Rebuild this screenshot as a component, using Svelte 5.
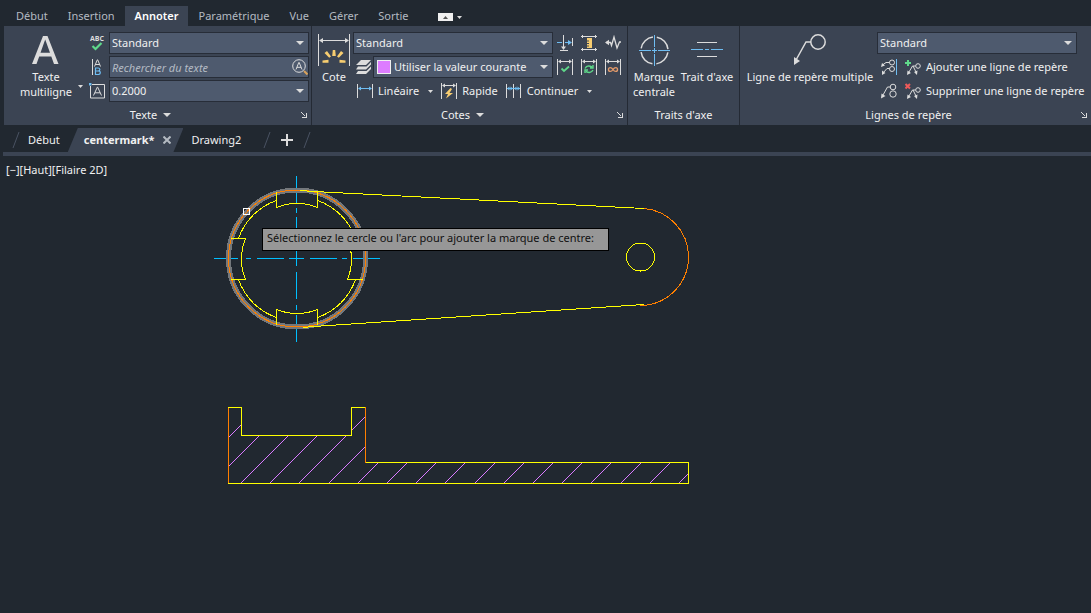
<script>
    let tabs = ['Début', 'Insertion', 'Annoter', 'Paramétrique', 'Vue', 'Gérer', 'Sortie'];
    let activeTab = 'Annoter';

    let textStyle = 'Standard';
    let search = '';
    let textHeight = '0.2000';
    let dimStyle = 'Standard';
    let dimLayer = 'Utiliser la valeur courante';
    let leaderStyle = 'Standard';

    // hatch lines run at 45deg, each one is x + y = sum
    let hatch = [];
    for (let k = 0; k < 18; k++) {
        hatch.push(Math.round(665.5 + 29.2 * k));
    }
</script>

{#snippet arrow()}
    <svg class="arrow" viewBox="0 0 8 4" aria-hidden="true"><path d="M0 0h8l-4 4z" /></svg>
{/snippet}

{#snippet smallArrow()}
    <svg class="arrow small" viewBox="0 0 5 3" aria-hidden="true"><path d="M0 0h5l-2.5 3z" /></svg>
{/snippet}

{#snippet launcher()}
    <button class="launcher" aria-label="Options">
        <svg viewBox="0 0 6 6" class="crisp"><path d="M0.5 0.5l4 4M5.5 1v4.5H1" /></svg>
    </button>
{/snippet}

<div class="app">
    <nav class="tabs">
        {#each tabs as tab}
            <button class="tab" class:active={tab === activeTab} on:click={() => (activeTab = tab)}>{tab}</button>
        {/each}
        <button class="minimize" aria-label="Réduire le ruban">
            <svg width="15" height="8" viewBox="0 0 15 8"><path fill="#f0f0f0" d="M0 0h15v8H0z" /><path fill="#555" d="M5 6l2.5-3L10 6z" /></svg>
            {@render smallArrow()}
        </button>
    </nav>

    <div class="ribbon">
        <section class="panel">
            <div class="body">
                <button class="big mtext">
                    <svg class="icon32" viewBox="0 0 32 32"><path fill="#dcdcdc" stroke="none" d="M2 30L13 2h4.500L28.500 30h-4.500l-2.700-7.500H9.200L6.500 30zM10.500 18.800h9.500L15.200 5.500z" /></svg>
                    <span>Texte<br />multiligne</span>
                    <span class="corner">{@render smallArrow()}</span>
                </button>
                <div class="rows">
                    <div class="row">
                        <button class="ico" aria-label="Orthographe">
                            <svg class="icon16" viewBox="0 0 16 16"><text x="8" y="6" class="abc">ABC</text><path d="M3.500 11l3 3 6-6" stroke="#5fd98a" stroke-width="2.200" /></svg>
                        </button>
                        <label class="field">
                            <select aria-label="Style de texte" bind:value={textStyle}><option>Standard</option></select>
                            {@render arrow()}
                        </label>
                    </div>
                    <div class="row">
                        <button class="ico" aria-label="Aligner le texte">
                            <svg class="icon16" viewBox="0 0 16 16"><path d="M3.500 0v16M5.500 7.500L8.300.8h.4l2.800 6.700M6.300 5.500h4.400" /><path d="M6.500 9v6.500h2.800q2-.1 2-1.800T9.300 12q1.600-.2 1.600-1.500T9.200 9zM6.500 12h3" stroke="#6fbdf2" stroke-width="1.200" /></svg>
                        </button>
                        <div class="field">
                            <input type="text" aria-label="Rechercher du texte" placeholder="Rechercher du texte" bind:value={search} />
                            <button class="find" aria-label="Rechercher">
                                <svg class="icon16" viewBox="0 0 16 16"><circle cx="7" cy="7" r="6.300" /><path d="M4 10.500L6.800 3.500h.4L10 10.500M5 8.300h4" /><path d="M12 12l3.500 3.500" stroke="#d9a25c" stroke-width="2" /></svg>
                            </button>
                        </div>
                    </div>
                    <div class="row">
                        <button class="ico" aria-label="Hauteur du texte">
                            <svg class="icon16" viewBox="0 0 16 16"><path d="M3 1.500h12.500v13.500H1.500V3" /><path d="M4.500 12.500L8.300 4.200h.4l3.800 8.300M6 9.800h5" /><path fill="#6fbdf2" stroke="none" d="M0 0h2.500v2.500H0z" /></svg>
                        </button>
                        <label class="field">
                            <select aria-label="Hauteur" bind:value={textHeight}><option>0.2000</option></select>
                            {@render arrow()}
                        </label>
                    </div>
                </div>
            </div>
            <footer><button class="title">Texte {@render arrow()}</button>{@render launcher()}</footer>
        </section>

        <section class="panel">
            <div class="body">
                <button class="big dim">
                    <svg class="icon32" viewBox="0 0 32 32">
                        <path d="M.5 0v32M31.500 0v32M2 6.500h28" class="crisp" />
                        <path fill="#dcdcdc" stroke="none" d="M1 6.500l4-2.500v5zM31 6.500l-4-2.500v5z" />
                        <path fill="#f7cd70" stroke="none" d="M14.800 16h2.400l.6 6h-3.600zM6.500 19l2.500-2 4 5.500-1.800 1.300zM25.500 19l-2.500-2-4 5.500 1.800 1.300zM4.500 26.500l6-.8v3h-6zM27.500 26.500l-6-.8v3h6z" />
                    </svg>
                    <span>Cote</span>
                </button>
                <div class="rows">
                    <div class="row">
                        <label class="field">
                            <select aria-label="Style de cote" bind:value={dimStyle}><option>Standard</option></select>
                            {@render arrow()}
                        </label>
                        <button class="ico" aria-label="Coupure"><svg class="icon16" viewBox="0 0 16 16"><path class="crisp" d="M6.500 0v13M3 15.500h8M15.500 3v8" /><path class="crisp" d="M0 7.500h5M8 7.500h5" stroke="#6fbdf2" /><path fill="#6fbdf2" stroke="none" d="M15 7.500L11 5v5z" /><path fill="#dcdcdc" stroke="none" d="M6.500 15L4 11.500h5z" /></svg></button>
                        <button class="ico" aria-label="Ajuster l'espace"><svg class="icon16" viewBox="0 0 16 16"><path class="crisp" d="M0 1.500h16M0 14.500h16M1.500 0v3M14.500 0v3M1.500 13v3M14.500 13v3" /><path fill="#f7cd70" stroke="none" d="M6 3h5v10H6v-1.500h2v-1H6V9h2V8H6V6.500h2v-1H6z" /></svg></button>
                        <button class="ico" aria-label="Ligne raccourcie"><svg class="icon16" viewBox="0 0 16 16"><path stroke-width="1.300" d="M1 7.500h4.500l1 3L9 2l3 11 2.500-6H16" /><path fill="#dcdcdc" stroke="none" d="M0 7.500l4-2.800v5.600z" /></svg></button>
                    </div>
                    <div class="row">
                        <svg class="layers" viewBox="0 0 16 16"><path fill="#dcdcdc" stroke="none" d="M6 1h10l-5 5H1zM3 7.500h8.500L16 3v2.500L11 10.500H1zM3 12h8.500L16 7.500V10L11 15H1z" /></svg>
                        <label class="field wide">
                            <select aria-label="Calque de cote" bind:value={dimLayer}><option>Utiliser la valeur courante</option></select>
                            <span class="swatch"></span>
                            {@render arrow()}
                        </label>
                        <button class="ico" aria-label="Inspecter"><svg class="icon16" viewBox="0 0 16 16"><path class="crisp" d="M.5 0v16M15.500 0v16M2 2.500h12" /><path fill="#dcdcdc" stroke="none" d="M1 2.500l3-2v4zM15 2.500l-3-2v4z" /><path d="M4.500 9.500L7 12l5-4.500" stroke="#5fd98a" stroke-width="1.800" /></svg></button>
                        <button class="ico" aria-label="Mettre à jour"><svg class="icon16" viewBox="0 0 16 16"><path class="crisp" d="M.5 0v16M15.500 0v16M2 2.500h12" /><path fill="#dcdcdc" stroke="none" d="M1 2.500l3-2v4zM15 2.500l-3-2v4z" /><path d="M4 9.500Q6 5.500 11 8M12 6v3H9M12 11q-2 4-7 1.500M4 14v-3h3" stroke="#5fd98a" stroke-width="1.400" /></svg></button>
                        <button class="ico" aria-label="Réassocier"><svg class="icon16" viewBox="0 0 16 16"><path class="crisp" d="M.5 0v16M15.500 0v16M2 2.500h12" /><path fill="#dcdcdc" stroke="none" d="M1 2.500l3-2v4zM15 2.500l-3-2v4z" /><path d="M8 10.500C6.500 8 3.500 8 3.500 10.500S6.500 13 8 10.500 12.500 8 12.500 10.500 9.500 13 8 10.500" stroke="#e39a6a" stroke-width="1.400" /></svg></button>
                    </div>
                    <div class="row commands">
                        <button class="cmd"><svg class="icon16" viewBox="0 0 16 16"><path class="crisp" d="M.5 1v14M15.500 1v14" /><path class="crisp" d="M2 5.500h12" stroke="#6fbdf2" /><path fill="#6fbdf2" stroke="none" d="M1 5.500l3-2v4zM15 5.500l-3-2v4z" /></svg>Linéaire</button>
                        <button class="drop" aria-label="Autres cotes">{@render smallArrow()}</button>
                        <button class="cmd"><svg class="icon16" viewBox="0 0 16 16"><path class="crisp" d="M.5 0v16M15.500 0v16M2 2.500h12" /><path fill="#dcdcdc" stroke="none" d="M1 2.500l3-2v4zM15 2.500l-3-2v4z" /><path fill="#f7cd70" stroke="none" d="M9.500 5L4 11h3l-2 4.500L12 10H8.500L11 6z" /></svg>Rapide</button>
                        <button class="cmd next"><svg class="icon16" viewBox="0 0 16 16"><path class="crisp" d="M.5 1v14M7.500 1v14M14.500 1v14" /><path class="crisp" d="M1 5.500h13" stroke="#6fbdf2" /><path fill="#6fbdf2" stroke="none" d="M1 5.500l2.500-2v4zM7 5.500l-2.500-2v4zM8 5.500l2.500-2v4zM14 5.500l-2.500-2v4z" /></svg>Continuer</button>
                        <button class="drop" aria-label="Continuer, options">{@render smallArrow()}</button>
                    </div>
                </div>
            </div>
            <footer><button class="title">Cotes {@render arrow()}</button>{@render launcher()}</footer>
        </section>

        <section class="panel">
            <div class="body">
                <button class="big mark">
                    <svg class="icon32" viewBox="0 0 32 32"><circle cx="16.500" cy="16.500" r="13.500" stroke-width="1.500" stroke-dasharray="17.200 4" stroke-dashoffset="-2" /><path class="crisp" stroke="#6fbdf2" d="M1 16.500h12M14 16.500h5M20 16.500h12M16.500 1v12M16.500 14v5M16.500 20v12" /></svg>
                    <span>Marque<br />centrale</span>
                </button>
                <button class="big axis">
                    <svg class="icon32" viewBox="0 0 32 32"><path class="crisp" d="M6 8.500h20M6 22.500h20" /><path class="crisp" stroke="#6fbdf2" d="M0 15.500h12M14 15.500h4M20 15.500h12" /></svg>
                    <span>Trait d'axe</span>
                </button>
            </div>
            <footer><span class="title">Traits d'axe</span></footer>
        </section>

        <section class="panel last">
            <div class="body">
                <button class="big leader">
                    <svg class="icon32" viewBox="0 0 32 32"><circle cx="24" cy="8" r="7.200" stroke-width="1.500" /><path stroke-width="1.500" d="M17 8h-5L2 26" /><path fill="#dcdcdc" stroke="none" d="M0 31V23l6 4z" /></svg>
                    <span>Ligne de repère multiple</span>
                </button>
                <div class="rows">
                    <div class="row">
                        <label class="field">
                            <select aria-label="Style de ligne de repère" bind:value={leaderStyle}><option>Standard</option></select>
                            {@render arrow()}
                        </label>
                    </div>
                    <div class="row edit">
                        <button class="ico" aria-label="Aligner"><svg class="icon16" viewBox="0 0 16 16"><circle cx="11" cy="3.500" r="2.500" /><circle cx="11" cy="10" r="2.500" /><path d="M8.500 3.500H5L1.500 6M8.500 9.500H6L2 14" /><path fill="#dcdcdc" stroke="none" d="M0 8l1-4 3 2.500zM1 16v-4.500l3.500 2.500z" /><path class="crisp" stroke="#6fbdf2" d="M15.500 0v16" /></svg></button>
                        <button class="cmd"><svg class="icon16" viewBox="0 0 16 16"><path class="crisp" stroke="#5fd98a" stroke-width="2" d="M0 4h6M3 1v6" /><circle cx="13" cy="7" r="2.300" /><path d="M10.700 7H7.500L4 13M8 7l3 6" /><path fill="#dcdcdc" stroke="none" d="M2 16l.5-4.500L6 14zM12 16l-3-3 3.500-1.500z" /></svg>Ajouter une ligne de repère</button>
                    </div>
                    <div class="row edit">
                        <button class="ico" aria-label="Regrouper"><svg class="icon16" viewBox="0 0 16 16"><circle cx="12" cy="4" r="2.800" /><circle cx="12" cy="11" r="3.200" /><path d="M9.200 4H6.500L2 12" /><path fill="#dcdcdc" stroke="none" d="M0 15.500l.5-5L4.500 13z" /></svg></button>
                        <button class="cmd"><svg class="icon16" viewBox="0 0 16 16"><path stroke="#ee5a5a" stroke-width="2" d="M.5 1l4.500 4.500M5 1L.5 5.500" /><circle cx="13" cy="7" r="2.300" /><path d="M10.700 7H7.500L4 13M8 7l3 6" /><path fill="#dcdcdc" stroke="none" d="M2 16l.5-4.500L6 14zM12 16l-3-3 3.500-1.500z" /></svg>Supprimer une ligne de repère</button>
                    </div>
                </div>
            </div>
            <footer><span class="title">Lignes de repère</span>{@render launcher()}</footer>
        </section>
    </div>

    <div class="files">
        <svg class="slash" viewBox="0 0 8 16"><path d="M1 16L7 0" /></svg>
        <button class="file">Début</button>
        <div class="file current">
            <button>centermark*</button>
            <button class="close" aria-label="Fermer"><svg viewBox="0 0 8 8"><path d="M0.500 0.500l7 7M7.500 0.500l-7 7" /></svg></button>
        </div>
        <button class="file">Drawing2</button>
        <svg class="slash after" viewBox="0 0 8 16"><path d="M1 16L7 0" /></svg>
        <button class="plus" aria-label="Nouveau dessin"><svg class="crisp" viewBox="0 0 12 12"><path d="M0 6h12M6 0v12" /></svg></button>
        <svg class="slash" viewBox="0 0 8 16"><path d="M1 16L7 0" /></svg>
    </div>

    <main class="canvas">
        <svg class="drawing" width="720" height="344" viewBox="0 156 720 344">
            <defs>
                <clipPath id="profile"><path d="M229 408H241V436H352V408H365V463H688V483H229z" /></clipPath>
            </defs>

            <!-- centre lines -->
            <path stroke="#00bfff" d="M214 258.500h24M246 258.500h5M257 258.500h27M289 258.500h15M310 258.500h27M342 258.500h5M353 258.500h27
                M296.500 176v27M296.500 208v5M296.500 217v28M296.500 251v15M296.500 272v27M296.500 305v5M296.500 315v27" />

            <!-- top view of the arm -->
            <circle cx="297" cy="258.500" r="68.500" stroke="#74787c" stroke-width="5" />
            <circle cx="297" cy="258.500" r="68.500" stroke="#ff7f00" />
            <g stroke="#ffff00">
                <path d="M300 190.500L314 191.500L644 208.500M303 327.500L314 326.500L644 304.500" />
                <path d="M276.500 192V207.500A55 55 0 0 1 317.500 207.500V192M276.500 325V309.500A55 55 0 0 0 317.500 309.500V325" />
                <path d="M231 238.500H245.500A55 55 0 0 0 245.500 279.500H231M363 238.500H347.500A55 55 0 0 1 347.500 279.500H363" />
                <path d="M276.500 200.500A61.500 61.500 0 0 0 238.500 238.500M317.500 200.500A61.500 61.500 0 0 1 355.500 238.500M238.500 279.500A61.500 61.500 0 0 0 276.500 317.500M355.500 279.500A61.500 61.500 0 0 1 317.500 317.500" />
                <circle cx="640.500" cy="257" r="14" />
            </g>
            <path stroke="#ff7f00" d="M644 208.500A48.600 48.600 0 0 1 688.500 257A48.600 48.600 0 0 1 640 305.500" />

            <!-- section -->
            <g clip-path="url(#profile)" stroke="#d97bff">
                {#each hatch as sum}
                    <path d="M{sum - 484} 484L{sum - 400} 400" />
                {/each}
            </g>
            <path stroke="#ffff00" d="M228 407.500H241.500V435.500H351.500V407.500H365.500M365.500 462.500H688.500V483.500H228" />
            <path stroke="#ff7f00" d="M228.500 408V483M365.500 407V463" />

            <rect x="243.500" y="208.500" width="6" height="6" stroke="#ffffff" />
        </svg>
        <div class="view">[−][Haut][Filaire 2D]</div>
        <div class="prompt">Sélectionnez le cercle ou l'arc pour ajouter la marque de centre:</div>
    </main>
</div>

<style>
    :global(body) {
        margin: 0;
        background: #212830;
    }
    .app {
        display: flex;
        flex-direction: column;
        min-height: 100vh;
        color: #f0f0f0;
        font: 11px/16px "Noto Sans", "Open Sans", sans-serif;
        background: #212830;
        overflow: hidden;
    }
    button, select, input {
        font: inherit;
        color: inherit;
        background: none;
        border: 0;
        margin: 0;
        padding: 0;
        white-space: nowrap;
    }
    svg {
        display: block;
        flex: none;
        fill: none;
        stroke: #dcdcdc;
    }
    .crisp {
        shape-rendering: crispEdges;
    }
    .arrow {
        width: 8px;
        height: 4px;
        fill: #dcdcdc;
        stroke: none;
    }
    .arrow.small {
        width: 5px;
        height: 3px;
    }
    .icon32 {
        width: 32px;
        height: 32px;
    }
    .icon16 {
        width: 16px;
        height: 16px;
    }
    .abc {
        font: bold 7px "Open Sans", sans-serif;
        text-anchor: middle;
        fill: #dcdcdc;
        stroke: none;
    }

    /* ribbon tabs */
    .tabs {
        display: flex;
        align-items: flex-end;
        height: 26px;
        padding-left: 6px;
    }
    .tab {
        height: 20px;
        padding: 0 10px;
        color: #b4bac2;
    }
    .tab.active {
        color: #ffffff;
        font-weight: 600;
        background: #3b4453;
    }
    .minimize {
        display: flex;
        align-items: center;
        gap: 4px;
        height: 18px;
        margin-left: 20px;
    }
    .minimize svg {
        stroke: none;
    }

    /* ribbon */
    .ribbon {
        display: flex;
        margin-left: 4px;
        background: #3b4453;
    }
    .panel {
        display: flex;
        flex-direction: column;
        border-right: 1px solid #242a34;
    }
    .panel.last {
        flex: 1;
        border: 0;
    }
    .body {
        display: flex;
        padding: 5px 2px 0 3px;
    }
    .rows {
        display: flex;
        flex-direction: column;
    }
    .row {
        display: flex;
        align-items: center;
        height: 24px;
    }
    .big {
        display: flex;
        flex-direction: column;
        align-items: center;
        flex: none;
        gap: 3px;
        padding-top: 3px;
        height: 72px;
        line-height: 15px;
        position: relative;
    }
    .mtext {
        width: 78px;
    }
    .dim {
        width: 38px;
    }
    .mark {
        width: 46px;
    }
    .axis {
        width: 60px;
    }
    .leader {
        width: 134px;
    }
    .corner {
        position: absolute;
        right: 2px;
        top: 54px;
    }
    .ico {
        display: flex;
        justify-content: center;
        width: 24px;
    }
    .field {
        display: grid;
        grid-template-columns: 1fr 16px;
        align-items: center;
        box-sizing: border-box;
        width: 200px;
        height: 22px;
        border: 1px solid #272d38;
        background: #4e5a6e;
    }
    .field > * {
        grid-row: 1;
    }
    .field select, .field input {
        grid-column: 1 / 3;
        appearance: none;
        width: 100%;
        height: 20px;
        padding-left: 2px;
        outline: 0;
        box-sizing: border-box;
    }
    .field input::placeholder {
        color: #b4bac4;
        font-style: italic;
        opacity: 1;
    }
    .field .arrow {
        grid-column: 2;
        justify-self: center;
        pointer-events: none;
    }
    .find {
        grid-column: 2;
    }
    .field.wide {
        width: 180px;
    }
    .field.wide select {
        padding-left: 20px;
    }
    .swatch {
        grid-column: 1;
        width: 12px;
        height: 12px;
        margin-left: 3px;
        border: 1px solid #f0f0f0;
        background: #dd7cff;
        pointer-events: none;
    }
    .layers {
        width: 16px;
        height: 16px;
        margin: 0 2px;
    }
    .commands {
        padding-left: 4px;
    }
    .cmd {
        display: flex;
        align-items: center;
        gap: 5px;
    }
    .cmd.next {
        margin-left: 8px;
    }
    .drop {
        display: flex;
        align-items: center;
        justify-content: center;
        width: 22px;
        height: 20px;
    }
    .edit {
        gap: 4px;
    }
    footer {
        display: flex;
        align-items: center;
        box-sizing: border-box;
        height: 22px;
        padding-top: 2px;
    }
    .title {
        flex: 1;
        display: flex;
        align-items: center;
        justify-content: center;
        gap: 6px;
    }
    .launcher {
        display: flex;
        justify-content: center;
        width: 14px;
    }
    .launcher svg {
        width: 6px;
        height: 6px;
    }

    /* drawing tabs */
    .files {
        display: flex;
        align-items: center;
        height: 24px;
        margin: 3px 0 0 3px;
        padding-left: 9px;
        border-bottom: 4px solid #3b4453;
    }
    .slash {
        width: 8px;
        height: 16px;
        stroke: #4a5362;
    }
    .slash.after {
        margin-left: 14px;
    }
    .file {
        padding: 0 8px;
    }
    .file.current {
        display: flex;
        align-items: center;
        gap: 9px;
        height: 24px;
        padding: 0 12px 0 16px;
        font-weight: 700;
        background: #3b4453;
        clip-path: polygon(10px 0, 100% 0, calc(100% - 10px) 100%, 0 100%);
    }
    .close svg {
        width: 8px;
        height: 8px;
        stroke: #b4bac2;
        stroke-width: 2;
    }
    .plus {
        margin: 0 10px;
    }
    .plus svg {
        width: 12px;
        height: 12px;
        stroke-width: 2;
    }

    /* drawing area */
    .canvas {
        position: relative;
        flex: 1;
    }
    .drawing {
        shape-rendering: crispEdges;
    }
    .view {
        position: absolute;
        left: 6px;
        top: 6px;
    }
    .prompt {
        position: absolute;
        left: 262px;
        top: 72px;
        padding: 1px 14px 4px 4px;
        border: 1px solid #000000;
        color: #101010;
        background: #979797;
        white-space: nowrap;
    }
</style>
